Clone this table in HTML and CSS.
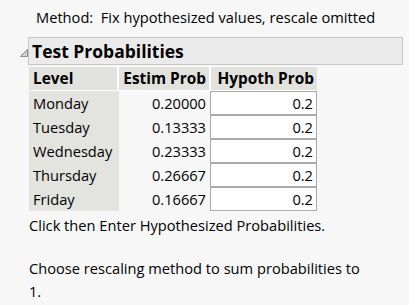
FILE: index.html
```html
<!DOCTYPE html>
<html>
<head>
<meta charset="utf-8">
<link rel="stylesheet" href="styles.css">
</head>
<body>
<div class="method">Method:&nbsp; Fix hypothesized values, rescale omitted</div>
<div class="outline">
  <svg class="disclose" width="8" height="8" viewBox="0 0 8 8"><polygon points="7.5,0.5 7.5,7.5 0.5,7.5" fill="#cfcfcf" stroke="#8a8a8a" stroke-width="1"/></svg>
  <div class="title">Test Probabilities</div>
</div>
<div class="content">
  <table class="probs">
    <colgroup><col class="c1"><col class="c2"><col class="c3"></colgroup>
    <thead>
      <tr><th class="lvl">Level</th><th class="num">Estim Prob</th><th class="num last">Hypoth Prob</th></tr>
    </thead>
    <tbody>
      <tr><td class="lvl">Monday</td><td class="num">0.20000</td><td class="hyp"><div class="box">0.2</div></td></tr>
      <tr><td class="lvl">Tuesday</td><td class="num">0.13333</td><td class="hyp"><div class="box">0.2</div></td></tr>
      <tr><td class="lvl">Wednesday</td><td class="num">0.23333</td><td class="hyp"><div class="box">0.2</div></td></tr>
      <tr><td class="lvl">Thursday</td><td class="num">0.26667</td><td class="hyp"><div class="box">0.2</div></td></tr>
      <tr><td class="lvl">Friday</td><td class="num">0.16667</td><td class="hyp"><div class="box">0.2</div></td></tr>
    </tbody>
  </table>
  <p class="note">Click then Enter Hypothesized Probabilities.</p>
  <p class="note wrap">Choose rescaling method to sum probabilities to 1.</p>
</div>
</body>
</html>
```
FILE: styles.css
```css
html, body {
  margin: 0;
  background: #f7f7f7;
}
body {
  font-family: "Open Sans", "Noto Sans", sans-serif;
  font-size: 14.65px;
  color: #000;
}
.method {
  padding: 7px 0 0 36px;
  height: 22px;
  line-height: 20px;
}
.outline {
  display: flex;
  align-items: center;
  margin-top: 8px;
}
.disclose {
  margin-left: 20px;
  margin-top: 3px;
  flex: none;
  display: block;
}
.title {
  flex: none;
  width: 370px;
  height: 26px;
  border: 1px solid #c6c6c6;
  background: #ebebeb;
  font-weight: bold;
  font-size: 17.5px;
  line-height: 26px;
  padding-left: 3px;
  box-sizing: content-box;
  margin-left: 0;
}
.content {
  margin-left: 29px;
  margin-top: 2px;
}
.probs {
  border-collapse: separate;
  border-spacing: 0;
  table-layout: fixed;
  width: 288px;
}
.c1 { width: 90px; }
.c2 { width: 92px; }
.c3 { width: 106px; }
.probs th {
  background: #e1e1dd;
  font-weight: bold;
  font-size: 15.4px;
  height: 23px;
  padding: 0 3px;
  border-right: 2px solid #fff;
  border-bottom: 1px solid #fff;
  line-height: 23px;
  white-space: nowrap;
  overflow: visible;
}
.probs th.last {
  border-right: none;
}
.probs th.lvl {
  text-align: left;
  padding-left: 4px;
}
.probs th.num {
  text-align: right;
}
.probs td {
  height: 24px;
  padding: 0;
  line-height: 24px;
}
.probs td.lvl {
  background: #e3e3df;
  padding: 0 4px;
  border-right: 2px solid transparent;
}
.probs td.num {
  text-align: right;
  padding: 0 3px 0 0;
  border-right: 2px solid transparent;
}
.box {
  height: 22px;
  line-height: 22px;
  margin-left: -1px;
  border: 1px solid #a9a9a9;
  background: #fff;
  text-align: right;
  padding-right: 3px;
}
.note {
  margin: 3px 0 0;
  line-height: 23px;
}
.note + .note {
  margin-top: 20px;
}
.wrap {
  width: 345px;
}
```
